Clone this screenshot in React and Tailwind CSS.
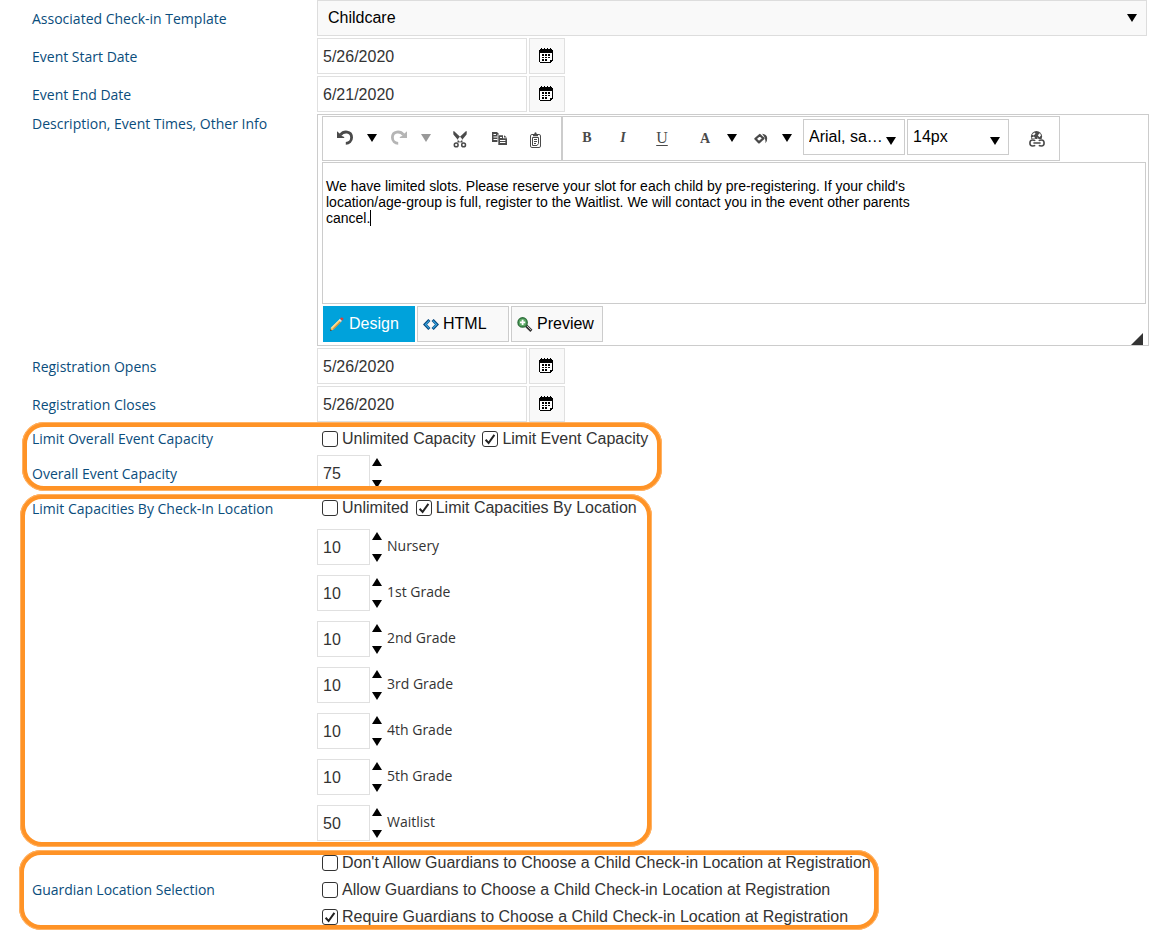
// src/pages/EventSettingsPage.jsx
import { useState } from "react";
import clsx from "clsx";

const LOCATIONS = [
  { id: "nursery", name: "Nursery", capacity: 10 },
  { id: "grade1", name: "1st Grade", capacity: 10 },
  { id: "grade2", name: "2nd Grade", capacity: 10 },
  { id: "grade3", name: "3rd Grade", capacity: 10 },
  { id: "grade4", name: "4th Grade", capacity: 10 },
  { id: "grade5", name: "5th Grade", capacity: 10 },
  { id: "waitlist", name: "Waitlist", capacity: 50 },
];

const GUARDIAN_OPTIONS = [
  { id: "deny", text: "Don't Allow Guardians to Choose a Child Check-in Location at Registration" },
  { id: "allow", text: "Allow Guardians to Choose a Child Check-in Location at Registration" },
  { id: "require", text: "Require Guardians to Choose a Child Check-in Location at Registration" },
];

const DESCRIPTION =
  "We have limited slots. Please reserve your slot for each child by pre-registering. If your child's location/age-group is full, register to the Waitlist. We will contact you in the event other parents cancel.";

// Icons

const Triangle = ({ up, className }) => (
  <svg width="10" height="8" viewBox="0 0 10 8" fill="currentColor" className={className} aria-hidden="true">
    <path d={up ? "M5 0L10 8H0z" : "M0 0H10L5 8z"} />
  </svg>
);

const CalendarIcon = () => (
  <svg width="14" height="15" viewBox="0 0 14 15" shapeRendering="crispEdges" aria-hidden="true">
    <path d="M1 1H13V2H14V13H13V14H12V15H1V14H0V2H1z" fill="#000" />
    <path d="M1 5H13V12H11V14H1z" fill="#fff" />
    <path d="M2 0H3V2H2zM5 0H6V2H5zM8 0H9V2H8zM11 0H12V2H11z" fill="#000" />
    <path
      d="M6 6h2v2H6zM9 6h2v2H9zM3 6h2v2H3zM3 9h2v1H3zM6 9h2v1H6zM9 9h2v1H9zM3 11h2v2H3zM6 11h2v2H6z"
      fill="#000"
    />
  </svg>
);

const UndoIcon = ({ flip }) => (
  <svg width="16" height="15" viewBox="0 0 16 15" className={clsx(flip && "-scale-x-100")} aria-hidden="true">
    <path d="M3.5 4.8C6.5 .8 14.6 .6 14.6 7.6C14.6 11.2 12 13.3 8.8 13.3" fill="none" stroke="currentColor" strokeWidth="2.8" />
    <path d="M0 1.2V8H7.2V7L5 6L2.6 3.6z" fill="currentColor" />
  </svg>
);

const CutIcon = () => (
  <svg width="14" height="17" viewBox="0 0 14 17" aria-hidden="true">
    <path d="M.2 .3H1.2L8.6 7.2L9.8 11.6H7.6L5.2 9.2L.4 3.6zM13.8 .3H12.8L5.4 7.2L4.2 11.6H6.4L8.8 9.2L13.6 3.6z" fill="currentColor" />
    <circle cx="3.2" cy="13.9" r="1.9" fill="none" stroke="currentColor" strokeWidth="1.5" />
    <circle cx="10.6" cy="13.9" r="1.9" fill="none" stroke="currentColor" strokeWidth="1.5" />
  </svg>
);

const CopyIcon = () => (
  <svg width="15" height="13" viewBox="0 0 15 13" aria-hidden="true">
    <path d="M0 0H5L7 2V10H0z" fill="currentColor" />
    <path d="M1.5 2.5h2.5M1.5 5h4M1.5 7.5h4" stroke="#fff" />
    <path d="M5.5 2.5H12L15 5.5V13H5.5z" fill="#fff" />
    <path d="M6.3 3.3H11V6.3H15V13H6.3zM12 3.3L15 5.4H12z" fill="currentColor" />
    <path d="M8 5.5h2M8 8.5h5.4M8 10.5h5.4" stroke="#fff" />
  </svg>
);

const PasteIcon = () => (
  <svg width="12" height="16" viewBox="0 0 12 16" aria-hidden="true">
    <rect x=".5" y="2.5" width="10" height="13" rx="1.4" fill="none" stroke="currentColor" />
    <path d="M3 4.2V2.2H4.2Q4.4 .2 5.5 .2T6.8 2.2H8V4.2z" fill="currentColor" />
    <path d="M2.5 5.5H8.5V11.5L7 13.5H2.5z" fill="none" stroke="currentColor" />
    <path d="M4 7.5h3M4 9.5h3M4 11.5h2" stroke="currentColor" />
  </svg>
);

const BucketIcon = () => (
  <svg width="14" height="11" viewBox="0 0 14 11" aria-hidden="true">
    <path d="M1.4 5.8L5.8 2L9.4 5.4L5 9.4z" fill="none" stroke="currentColor" strokeWidth="2.2" strokeLinejoin="round" />
    <path d="M8 .8Q12.8 1.2 13.2 5Q13.4 8.4 11.4 10.2Q12 5 8 .8z" fill="currentColor" />
  </svg>
);

const LinkIcon = () => (
  <svg width="16" height="16" viewBox="0 0 16 16" aria-hidden="true">
    <circle cx="7.5" cy="5.6" r="5.6" fill="currentColor" />
    <path d="M3 3.6L5.4 1.6L6.6 2.8L4.6 4.4zM8.8 4.2L11 2L12 4.4L10.4 6.2zM2.6 6.4L5 5.6L6.4 7.4L3.4 7.6zM8 6.6L10 7.6H8z" fill="#fff" />
    <path d="M0 8H16V16H0z" fill="#fff" />
    <path
      d="M6.2 9.8Q5.4 9 3.6 9Q.9 9 .9 12T3.6 15Q5.4 15 6.2 14.4M9.8 9.8Q10.6 9 12.4 9Q15.1 9 15.1 12T12.4 15Q10.6 15 9.8 14.4M4.4 12H11.6"
      fill="none"
      stroke="currentColor"
      strokeWidth="1.6"
    />
  </svg>
);

const PencilIcon = () => (
  <svg width="14" height="14" viewBox="0 0 14 14" aria-hidden="true">
    <path d="M0 14L1.2 10.6L9.4 2.4L11.4 4.4L3.2 12.8z" fill="#f6c56b" />
    <path d="M1.2 10.6L9.4 2.4L10 3L1.8 11.2z" fill="#fbe7a8" />
    <path d="M3.2 12.8L11.4 4.4L10.8 3.8L2.6 12.2z" fill="#c9872a" />
    <path d="M0 14L.6 12L2 13.4z" fill="#333" />
    <path d="M8.8 3L10 1.8L12 3.8L10.8 5z" fill="#dfe6ee" />
    <path d="M10 1.8L11.2 .6Q12.2 .2 13 1T13.2 2.6L12 3.8z" fill="#d8413a" />
  </svg>
);

const CodeIcon = () => (
  <svg width="16" height="11" viewBox="0 0 16 11" aria-hidden="true">
    <path d="M6.4 1L2 5.5L6.4 10M9.6 1L14 5.5L9.6 10" fill="none" stroke="#0c4a80" strokeWidth="3" />
    <path d="M6.2 1.6L2.4 5.5L6.2 9.4M9.8 1.6L13.6 5.5L9.8 9.4" fill="none" stroke="#35a5e0" strokeWidth="1.2" />
  </svg>
);

const PreviewIcon = () => (
  <svg width="16" height="15" viewBox="0 0 16 15" aria-hidden="true">
    <path d="M9 8.6L14.4 13.8" stroke="#333" strokeWidth="3" />
    <path d="M10 9L14 13" stroke="#bbb" />
    <circle cx="5.6" cy="5.4" r="4.6" fill="#5aa864" stroke="#2d6e3a" strokeWidth="1.4" />
    <path d="M5.6 2.8v5.2M3 5.4h5.2" stroke="#fff" strokeWidth="1.8" />
  </svg>
);

// Form pieces

const FieldLabel = ({ htmlFor, children }) => (
  <label htmlFor={htmlFor} className="block font-['Open_Sans',sans-serif] text-sm leading-5 text-[#0a4d7c]">
    {children}
  </label>
);

const Row = ({ id, label, top, children }) => (
  <div className={clsx("flex", top ? "items-start" : "items-center")}>
    <div className={clsx("w-[285px] shrink-0", !top && "pt-px")}>
      <FieldLabel htmlFor={id}>{label}</FieldLabel>
    </div>
    {children}
  </div>
);

const DateField = ({ id, label, value }) => (
  <Row id={id} label={label}>
    <div className="flex gap-0.5">
      <input
        id={id}
        type="text"
        defaultValue={value}
        className="h-9 w-[210px] border border-[#e0e0e0] bg-white pt-0.5 pl-[5px] text-base text-[#333]"
      />
      <button
        type="button"
        aria-label={`Pick ${label}`}
        className="flex size-9 items-center justify-center border border-[#e0e0e0] bg-[#f9f9f9] pr-0.5 pb-px"
      >
        <CalendarIcon />
      </button>
    </div>
  </Row>
);

const CapacityField = ({ id, value }) => {
  const [amount, setAmount] = useState(value);

  return (
    <div className="flex h-9 gap-0.5">
      <input
        id={id}
        type="text"
        inputMode="numeric"
        value={amount}
        onChange={(e) => setAmount(Number(e.target.value) || 0)}
        className="w-[53px] border border-[#e0e0e0] bg-white pt-0.5 pl-[5px] text-base text-[#333]"
      />
      <div className="flex flex-col justify-between py-[3px]">
        <button type="button" aria-label="Increase" onClick={() => setAmount(amount + 1)}>
          <Triangle up />
        </button>
        <button type="button" aria-label="Decrease" onClick={() => setAmount(Math.max(0, amount - 1))}>
          <Triangle />
        </button>
      </div>
    </div>
  );
};

const CheckOption = ({ id, checked, onChange, children }) => (
  <label htmlFor={id} className="flex items-center gap-1 text-base leading-5 whitespace-nowrap text-[#333]">
    <span className="relative size-4">
      <input
        id={id}
        type="checkbox"
        checked={checked}
        onChange={onChange}
        className="block size-4 appearance-none rounded-[3px] border border-[#333] bg-white"
      />
      {checked && (
        <svg viewBox="0 0 16 16" className="pointer-events-none absolute inset-0 size-4" aria-hidden="true">
          <path d="M3.6 8.8L6.6 12L12.4 3.8" fill="none" stroke="#222" strokeWidth="2" />
        </svg>
      )}
    </span>
    {children}
  </label>
);

const ToolButton = ({ label, className, children }) => (
  <button type="button" aria-label={label} className={clsx("flex items-center justify-center", className)}>
    {children}
  </button>
);

const ToolSelect = ({ label, value }) => (
  <div className="relative h-9 w-[102px]">
    <select
      aria-label={label}
      defaultValue={value}
      className="block size-full appearance-none border border-[#ccc] bg-white pl-[5px] text-base text-black"
    >
      <option>{value}</option>
    </select>
    <Triangle className="pointer-events-none absolute right-[9px] bottom-2.5" />
  </div>
);

// Highlight frame drawn over a group of rows
const Highlight = ({ className }) => (
  <div
    className={clsx(
      "pointer-events-none absolute rounded-[22px] border-[5px] border-[#ff9326] outline-1 -outline-offset-1 outline-[#ffb366]",
      className
    )}
  />
);

const Toolbar = () => (
  <div className="flex h-[45px] self-start text-[#4a4a4a]">
    <div className="flex border border-[#ccc] pb-0.5 pl-0.5">
      <ToolButton label="Undo" className="w-10"><UndoIcon /></ToolButton>
      <ToolButton label="Undo history" className="w-3.5 text-black"><Triangle /></ToolButton>
      <ToolButton label="Redo" className="w-10 text-[#b5b5b5]"><UndoIcon flip /></ToolButton>
      <ToolButton label="Redo history" className="w-3.5 text-[#999]"><Triangle /></ToolButton>
      <ToolButton label="Cut" className="w-[54px] pt-1"><CutIcon /></ToolButton>
      <ToolButton label="Copy" className="w-6 pt-0.5"><CopyIcon /></ToolButton>
      <ToolButton label="Paste" className="w-[50px] pt-1"><PasteIcon /></ToolButton>
    </div>
    <div className="flex border border-[#ccc] pb-0.5 font-['Liberation_Serif',serif] text-sm">
      <ToolButton label="Bold" className="w-12 font-bold">B</ToolButton>
      <ToolButton label="Italic" className="w-6 font-bold italic">I</ToolButton>
      <ToolButton label="Underline" className="w-[54px] text-base underline underline-offset-2">U</ToolButton>
      <ToolButton label="Text color" className="w-8 pt-0.5 font-bold">A</ToolButton>
      <ToolButton label="Pick text color" className="w-[22px] text-black"><Triangle /></ToolButton>
      <ToolButton label="Background color" className="w-9 pt-0.5"><BucketIcon /></ToolButton>
      <ToolButton label="Pick background color" className="w-4 text-black"><Triangle /></ToolButton>
      <div className="ml-2 flex gap-0.5 pt-0.5 font-['Liberation_Sans',Arial,sans-serif] text-black">
        <ToolSelect label="Font" value="Arial, sa…" />
        <ToolSelect label="Font size" value="14px" />
      </div>
      <ToolButton label="Insert link" className="w-[50px] pt-0.5 pl-1.5"><LinkIcon /></ToolButton>
    </div>
  </div>
);

const EDITOR_TABS = [
  { name: "Design", Icon: PencilIcon },
  { name: "HTML", Icon: CodeIcon },
  { name: "Preview", Icon: PreviewIcon },
];

const Editor = ({ id }) => {
  const [tab, setTab] = useState("Design");

  return (
    <div className="relative -mr-0.5 flex flex-1 flex-col border border-[#ccc] pt-px pr-0.5 pb-[3px] pl-1">
      <Toolbar />
      <div className="relative mt-px h-[142px] border border-[#ccc] bg-white">
        <textarea
          id={id}
          defaultValue={DESCRIPTION}
          className="block h-full w-[598px] resize-none pt-[15px] pl-[3px] text-sm leading-4 text-black outline-none"
        />
        {/* text cursor */}
        <span className="pointer-events-none absolute top-[47px] left-[47px] h-4 w-px bg-black" />
      </div>
      <div className="mt-0.5 ml-px flex gap-0.5">
        {EDITOR_TABS.map(({ name, Icon }) => (
          <button
            key={name}
            type="button"
            onClick={() => setTab(name)}
            className={clsx(
              "flex h-9 w-[92px] items-center gap-1 border pl-[5px] text-base",
              tab === name
                ? "border-[#00a2db] bg-[#00a2db] text-white"
                : "border-[#ccc] bg-[#f9f9f9] text-black"
            )}
          >
            <span className="flex w-4 justify-center"><Icon /></span>
            {name}
          </button>
        ))}
      </div>
      <svg width="12" height="12" viewBox="0 0 12 12" className="absolute right-[5px] bottom-0" aria-hidden="true">
        <path d="M12 0V12H0z" fill="#333" />
      </svg>
    </div>
  );
};

export default function App() {
  const [limitEvent, setLimitEvent] = useState(true);
  const [limitLocations, setLimitLocations] = useState(true);
  const [guardian, setGuardian] = useState("require");

  return (
    <form className="flex flex-col gap-0.5 bg-white pr-[15px] pl-8 font-['Liberation_Sans',Arial,sans-serif]">
      <Row id="template" label="Associated Check-in Template">
        <div className="relative flex-1">
          <select
            id="template"
            className="block h-9 w-full appearance-none border border-[#ddd] bg-[#f9f9f9] pl-2.5 text-base text-black"
          >
            <option>Childcare</option>
          </select>
          <Triangle className="pointer-events-none absolute top-3.5 right-2.5" />
        </div>
      </Row>
      <DateField id="start" label="Event Start Date" value="5/26/2020" />
      <DateField id="end" label="Event End Date" value="6/21/2020" />
      <Row id="description" label="Description, Event Times, Other Info" top>
        <Editor id="description" />
      </Row>
      <DateField id="opens" label="Registration Opens" value="5/26/2020" />
      <DateField id="closes" label="Registration Closes" value="5/26/2020" />

      {/* Overall capacity */}
      <section className="relative flex flex-col gap-0.5">
        <Row id="unlimited" label="Limit Overall Event Capacity">
          <div className="flex h-[29px] items-center gap-[7px] pl-[5px]">
            <CheckOption id="unlimited" checked={!limitEvent} onChange={() => setLimitEvent(false)}>
              Unlimited Capacity
            </CheckOption>
            <CheckOption id="limited" checked={limitEvent} onChange={() => setLimitEvent(true)}>
              Limit Event Capacity
            </CheckOption>
          </div>
        </Row>
        <Row id="capacity" label="Overall Event Capacity">
          <CapacityField id="capacity" value={75} />
        </Row>
        <Highlight className="-top-0.5 -left-2.5 h-[69px] w-[640px]" />
      </section>

      {/* Capacity per location */}
      <section className="relative flex flex-col gap-1.5">
        <Row id="loc-unlimited" label="Limit Capacities By Check-In Location">
          <div className="flex h-[30px] items-center gap-[7px] pl-[5px]">
            <CheckOption id="loc-unlimited" checked={!limitLocations} onChange={() => setLimitLocations(false)}>
              Unlimited
            </CheckOption>
            <CheckOption id="loc-limited" checked={limitLocations} onChange={() => setLimitLocations(true)}>
              Limit Capacities By Location
            </CheckOption>
          </div>
        </Row>
        <div className="ml-[285px] flex flex-col gap-2.5">
          {LOCATIONS.map((location) => (
            <div key={location.id} className="flex items-center gap-[5px]">
              <CapacityField id={location.id} value={location.capacity} />
              <label
                htmlFor={location.id}
                className="pb-0.5 font-['Open_Sans',sans-serif] text-sm leading-5 text-[#333]"
              >
                {location.name}
              </label>
            </div>
          ))}
        </div>
        <Highlight className="top-px -left-3 h-[353px] w-[632px]" />
      </section>

      {/* Guardian choice */}
      <section className="relative mt-1.5">
        <Row id="require" label="Guardian Location Selection">
          <div className="flex flex-col pl-[5px]">
            {GUARDIAN_OPTIONS.map((option) => (
              <div key={option.id} className="flex h-[27px] items-center">
                <CheckOption
                  id={option.id}
                  checked={guardian === option.id}
                  onChange={() => setGuardian(option.id)}
                >
                  {option.text}
                </CheckOption>
              </div>
            ))}
          </div>
        </Row>
        <Highlight className="top-px -left-[13px] h-20 w-[860px]" />
      </section>
    </form>
  );
}
